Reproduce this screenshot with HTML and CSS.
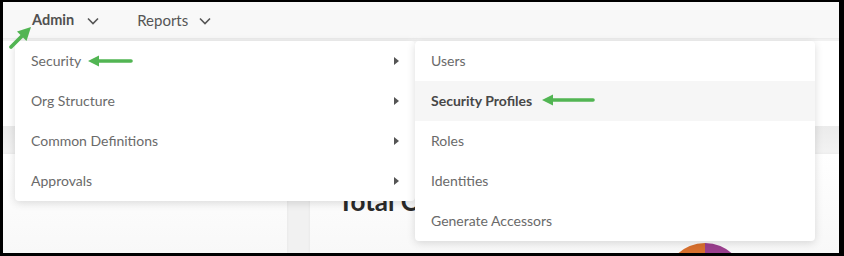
FILE: index.html
```html
<!DOCTYPE html>
<html>
<head>
<meta charset="utf-8">
<link rel="stylesheet" href="styles.css">
</head>
<body>
<div class="screen">
  <nav class="nav">
    <div class="nav-item nav-admin">Admin
      <svg class="chev" width="12" height="8" viewBox="0 0 12 8"><path d="M1 1.5 L6 6.5 L11 1.5" fill="none" stroke="#555" stroke-width="1.6"/></svg>
    </div>
    <div class="nav-item">Reports
      <svg class="chev" width="12" height="8" viewBox="0 0 12 8"><path d="M1 1.5 L6 6.5 L11 1.5" fill="none" stroke="#555" stroke-width="1.6"/></svg>
    </div>
  </nav>
  <div class="panel"></div>
  <div class="band"></div>
  <div class="cards">
    <div class="card card-left"></div>
    <div class="card card-right">
      <h2 class="card-title">Total Counts</h2>
      <div class="pie"></div>
    </div>
  </div>

  <ul class="menu menu-main">
    <li class="menu-item">Security <span class="caret"></span></li>
    <li class="menu-item">Org Structure <span class="caret"></span></li>
    <li class="menu-item">Common Definitions <span class="caret"></span></li>
    <li class="menu-item">Approvals <span class="caret"></span></li>
  </ul>
  <ul class="menu menu-sub">
    <li class="menu-item">Users</li>
    <li class="menu-item active">Security Profiles</li>
    <li class="menu-item">Roles</li>
    <li class="menu-item">Identities</li>
    <li class="menu-item">Generate Accessors</li>
  </ul>

  <svg class="arrow arrow-diag" width="26" height="26" viewBox="0 0 26 26">
    <line x1="3" y1="23" x2="16" y2="10" stroke="#52b553" stroke-width="3.8" stroke-linecap="round"/>
    <polygon points="23,3 9,7.5 18.5,17" fill="#52b553"/>
  </svg>
  <svg class="arrow arrow-h1" width="46" height="12" viewBox="0 0 46 12">
    <polygon points="0,6 11,0.5 11,11.5" fill="#52b553"/>
    <line x1="9" y1="6" x2="43" y2="6" stroke="#52b553" stroke-width="3.6" stroke-linecap="round"/>
  </svg>
  <svg class="arrow arrow-h2" width="54" height="12" viewBox="0 0 54 12">
    <polygon points="0,6 11,0.5 11,11.5" fill="#52b553"/>
    <line x1="9" y1="6" x2="51" y2="6" stroke="#52b553" stroke-width="3.6" stroke-linecap="round"/>
  </svg>
</div>
</body>
</html>
```

FILE: styles.css
```css
html, body {
  margin: 0;
  padding: 0;
}
body {
  background: #000;
  padding: 2px 5px 3px 3px;
  width: 844px;
  height: 256px;
  box-sizing: border-box;
  font-family: Lato, "Open Sans", sans-serif;
}
.screen {
  position: relative;
  width: 836px;
  height: 251px;
  overflow: hidden;
  background: #f1f1f1;
  display: flex;
  flex-direction: column;
}
.nav {
  height: 36px;
  background: #f8f8f8;
  border-bottom: 1px solid #ececec;
  display: flex;
  align-items: center;
  gap: 38px;
  padding-left: 29px;
  flex-shrink: 0;
}
.nav-item {
  display: flex;
  align-items: center;
  gap: 11px;
  font-size: 15px;
  color: #555;
  padding-bottom: 1px;
}
.nav-admin {
  font-weight: 700;
  color: #505050;
  gap: 13px;
  font-size: 14.5px;
}
.chev { display: block; margin-top: 2px; }
.panel {
  margin-top: 2px;
  height: 85px;
  background: #fff;
  flex-shrink: 0;
}
.band {
  height: 28px;
  background: linear-gradient(#ebebeb, #f3f3f3);
  flex-shrink: 0;
}
.cards {
  flex: 1;
  display: flex;
  gap: 23px;
}
.card {
  background: linear-gradient(#fff, #f8f8f8);
  box-shadow: 0 0 3px rgba(0,0,0,0.06);
}
.card-left { width: 284px; }
.card-right {
  flex: 1;
  position: relative;
  padding-left: 28px;
}
.card-title {
  margin: 32px 0 0;
  width: 77px;
  overflow: hidden;
  font-size: 26px;
  line-height: 30px;
  font-weight: 700;
  color: #2a2a2a;
  font-family: Lato, sans-serif;
  white-space: nowrap;
}
.pie {
  position: absolute;
  left: 355px;
  top: 89px;
  width: 80px;
  height: 80px;
  border-radius: 50%;
  background: linear-gradient(90deg, #d8702e 50%, #9b3f8e 50%);
}
.menu {
  position: absolute;
  top: 39px;
  width: 400px;
  margin: 0;
  padding: 0;
  list-style: none;
  background: #fff;
  border-radius: 4px;
  box-shadow: 0 2px 8px rgba(0,0,0,0.14);
}
.menu-main { left: 12px; }
.menu-sub { left: 412px; }
.menu-item {
  height: 40px;
  display: flex;
  align-items: center;
  justify-content: space-between;
  padding: 0 16px 2px 16px;
  box-sizing: border-box;
  font-size: 14px;
  color: #6a6a6a;
}
.menu-item.active {
  background: #f6f6f6;
  color: #474747;
  font-weight: 700;
}
.caret {
  width: 0;
  height: 0;
  margin-top: 2px;
  border-top: 4px solid transparent;
  border-bottom: 4px solid transparent;
  border-left: 5px solid #555;
}
.arrow { position: absolute; display: block; }
.arrow-diag { left: 5px; top: 22px; }
.arrow-h1 { left: 85px; top: 53px; }
.arrow-h2 { left: 539px; top: 92px; }
```
